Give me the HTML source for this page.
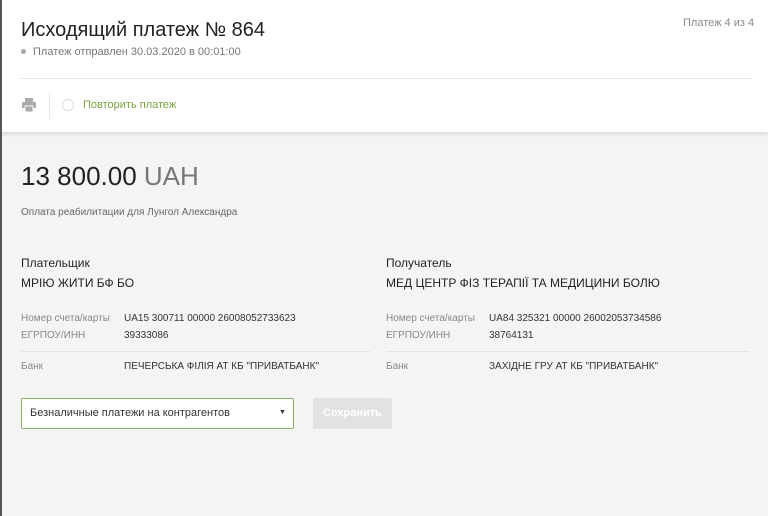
<!DOCTYPE html><html><head><meta charset="utf-8"><style>
*{margin:0;padding:0;box-sizing:border-box}
body{width:768px;height:516px;overflow:hidden;background:#f4f4f4;font-family:"Liberation Sans",sans-serif;color:#222;position:relative}
.a{position:absolute;white-space:nowrap}
.hdr{position:absolute;left:0;top:0;width:768px;height:132px;background:#fff;box-shadow:0 2px 4px rgba(0,0,0,.12)}
.g{color:#888;font-size:10px}
.v{color:#333;font-size:10px}
</style></head><body>
<div class="hdr"></div>
<div class="a" style="left:0;top:0;width:2px;height:516px;background:#555;z-index:5"></div>
<div class="a" style="left:21px;top:19px;font-size:20px;color:#222">Исходящий платеж № 864</div>
<div class="a" style="left:21px;top:49px;width:5px;height:5px;border-radius:50%;background:#aaa"></div>
<div class="a" style="left:33px;top:46px;font-size:11px;color:#777">Платеж отправлен 30.03.2020 в 00:01:00</div>
<div class="a" style="left:683px;top:17px;font-size:11px;color:#888">Платеж 4 из 4</div>
<div class="a" style="left:21px;top:78px;width:730px;height:1px;background:#e4e4e4"></div>
<svg class="a" style="left:22px;top:98px" width="14" height="14" viewBox="0 0 14 14"><rect x="3" y="0" width="8" height="4" fill="#aaa"/><rect x="0" y="4" width="14" height="6" rx="1" fill="#aaa"/><rect x="3" y="8" width="8" height="6" fill="#aaa" stroke="#fff" stroke-width="1"/></svg>
<div class="a" style="left:49px;top:93px;width:1px;height:26px;background:#e8e8e8"></div>
<div class="a" style="left:62px;top:99px;width:12px;height:12px;border-radius:50%;border:1px solid #ddd"></div>
<div class="a" style="left:83px;top:99px;font-size:11px;color:#7ba23f">Повторить платеж</div>
<div class="a" style="left:21px;top:161px;font-size:26px;color:#222">13 800.00 <span style="color:#777">UAH</span></div>
<div class="a" style="left:21px;top:207px;font-size:10px;color:#666">Оплата реабилитации для Лунгол Александра</div>

<div class="a" style="left:21px;top:256px;font-size:12px">Плательщик</div>
<div class="a" style="left:21px;top:276px;font-size:12px">МРІЮ ЖИТИ БФ БО</div>
<div class="a g" style="left:21px;top:313px">Номер счета/карты</div>
<div class="a v" style="left:124px;top:313px">UA15 300711 00000 26008052733623</div>
<div class="a g" style="left:21px;top:330px">ЕГРПОУ/ИНН</div>
<div class="a v" style="left:124px;top:330px">39333086</div>
<div class="a" style="left:21px;top:351px;width:349px;height:1px;background:#e2e2e2"></div>
<div class="a g" style="left:21px;top:361px">Банк</div>
<div class="a v" style="left:124px;top:361px">ПЕЧЕРСЬКА ФІЛІЯ АТ КБ "ПРИВАТБАНК"</div>

<div class="a" style="left:386px;top:256px;font-size:12px">Получатель</div>
<div class="a" style="left:386px;top:276px;font-size:12px">МЕД ЦЕНТР ФІЗ ТЕРАПІЇ ТА МЕДИЦИНИ БОЛЮ</div>
<div class="a g" style="left:386px;top:313px">Номер счета/карты</div>
<div class="a v" style="left:489px;top:313px">UA84 325321 00000 26002053734586</div>
<div class="a g" style="left:386px;top:330px">ЕГРПОУ/ИНН</div>
<div class="a v" style="left:489px;top:330px">38764131</div>
<div class="a" style="left:386px;top:351px;width:363px;height:1px;background:#e2e2e2"></div>
<div class="a g" style="left:386px;top:361px">Банк</div>
<div class="a v" style="left:489px;top:361px">ЗАХІДНЕ ГРУ АТ КБ "ПРИВАТБАНК"</div>

<div class="a" style="left:21px;top:398px;width:273px;height:31px;background:#fff;border:1px solid #8fb06a;border-radius:2px"></div>
<div class="a" style="left:30px;top:407px;font-size:11px;color:#333">Безналичные платежи на контрагентов</div>
<div class="a" style="left:279px;top:409px;font-size:7px;color:#333">▼</div>
<div class="a" style="left:313px;top:398px;width:79px;height:31px;background:#e2e2e2;border-radius:2px;color:#fff;font-size:11px;font-weight:bold;text-align:center;line-height:31px">Сохранить</div>
</body></html>
